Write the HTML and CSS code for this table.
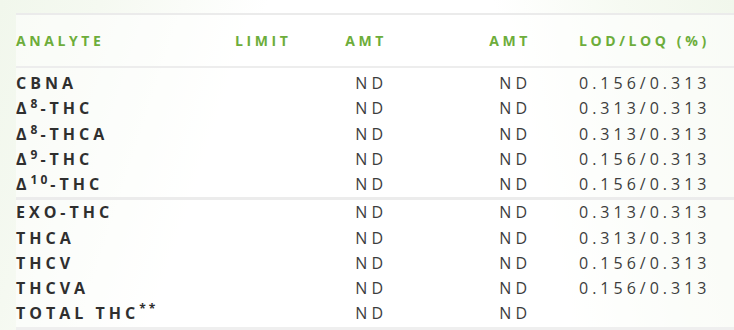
FILE: index.html
```html
<!DOCTYPE html>
<html>
<head>
<meta charset="utf-8">
<link rel="stylesheet" href="styles.css">
</head>
<body>
<div class="page">
  <div class="results">
    <div class="row head">
      <div class="c1">ANALYTE</div>
      <div class="c2">LIMIT</div>
      <div class="c3">AMT</div>
      <div class="c4">AMT</div>
      <div class="c5">LOD/LOQ (%)</div>
    </div>
    <div class="group first">
      <div class="row"><div class="c1 name">CBNA</div><div class="c2"></div><div class="c3">ND</div><div class="c4">ND</div><div class="c5">0.156/0.313</div></div>
      <div class="row"><div class="c1 name">Δ<sup>8</sup>-THC</div><div class="c2"></div><div class="c3">ND</div><div class="c4">ND</div><div class="c5">0.313/0.313</div></div>
      <div class="row"><div class="c1 name">Δ<sup>8</sup>-THCA</div><div class="c2"></div><div class="c3">ND</div><div class="c4">ND</div><div class="c5">0.313/0.313</div></div>
      <div class="row"><div class="c1 name">Δ<sup>9</sup>-THC</div><div class="c2"></div><div class="c3">ND</div><div class="c4">ND</div><div class="c5">0.156/0.313</div></div>
      <div class="row"><div class="c1 name">Δ<sup>10</sup>-THC</div><div class="c2"></div><div class="c3">ND</div><div class="c4">ND</div><div class="c5">0.156/0.313</div></div>
    </div>
    <div class="group">
      <div class="row"><div class="c1 name">EXO-THC</div><div class="c2"></div><div class="c3">ND</div><div class="c4">ND</div><div class="c5">0.313/0.313</div></div>
      <div class="row"><div class="c1 name">THCA</div><div class="c2"></div><div class="c3">ND</div><div class="c4">ND</div><div class="c5">0.313/0.313</div></div>
      <div class="row"><div class="c1 name">THCV</div><div class="c2"></div><div class="c3">ND</div><div class="c4">ND</div><div class="c5">0.156/0.313</div></div>
      <div class="row"><div class="c1 name">THCVA</div><div class="c2"></div><div class="c3">ND</div><div class="c4">ND</div><div class="c5">0.156/0.313</div></div>
      <div class="row"><div class="c1 name">TOTAL THC<sup>**</sup></div><div class="c2"></div><div class="c3">ND</div><div class="c4">ND</div><div class="c5"></div></div>
    </div>
  </div>
</div>
</body>
</html>
```
FILE: styles.css
```css
html, body {
  margin: 0;
  padding: 0;
}
body {
  width: 734px;
  height: 330px;
  overflow: hidden;
  font-family: "Open Sans", "Liberation Sans", sans-serif;
}
.page {
  height: 330px;
  padding: 13px 0 0 16px;
  box-sizing: border-box;
  background:
    linear-gradient(258deg, #f1f7ec 0%, #f6faf2 14%, rgba(255,255,255,0) 30%),
    linear-gradient(108deg, #f1f7ec 0%, #f5f9f1 12%, rgba(255,255,255,0) 32%),
    #ffffff;
}
.results {
  border-top: 2px solid #ebebeb;
  border-bottom: 11px solid #efefef;
  background: rgba(255,255,255,0.55);
}
.row {
  display: grid;
  grid-template-columns: 219px 100px 52px 144px 1fr;
  height: 25.25px;
  line-height: 25px;
  font-size: 16px;
  letter-spacing: 4px;
  color: #3d3d3d;
  white-space: nowrap;
}
.row.head {
  height: 51px;
  line-height: 51px;
  font-size: 14px;
  font-weight: 700;
  color: #6dad3b;
  letter-spacing: 3.6px;
  border-bottom: 2px solid #ededed;
}
.group.first {
  padding-top: 3px;
}
.group + .group {
  border-top: 3px solid #ececec;
}
.c3, .c4 {
  text-align: right;
}
.c5 {
  padding-left: 48px;
}
.name {
  font-weight: 700;
  color: #2f2f2f;
}
.name sup {
  font-size: 12px;
  line-height: 0;
  vertical-align: 6px;
  letter-spacing: 3px;
}
```
